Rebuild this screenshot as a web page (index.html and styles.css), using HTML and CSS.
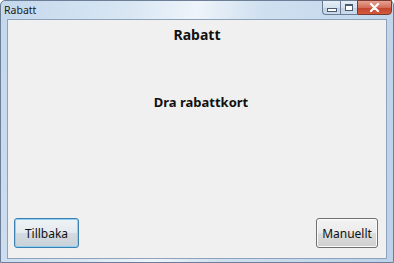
FILE: index.html
```html
<!DOCTYPE html>
<html>
<head>
<meta charset="utf-8">
<link rel="stylesheet" href="styles.css">
</head>
<body>
<div class="window">
  <div class="titlebar">
    <span class="title">Rabatt</span>
    <div class="controls">
      <div class="ctl min"><span class="min-glyph"></span></div>
      <div class="ctl max"><span class="max-glyph"></span></div>
      <div class="ctl close">
        <svg width="11" height="9" viewBox="0 0 11 9"><path d="M2 1 L9 8 M9 1 L2 8" stroke="#fff" stroke-width="2.2" stroke-linecap="round"/></svg>
      </div>
    </div>
  </div>
  <div class="client">
    <h1 class="heading">Rabatt</h1>
    <p class="prompt">Dra rabattkort</p>
    <div class="footer">
      <button class="btn default">Tillbaka</button>
      <button class="btn manual">Manuellt</button>
    </div>
  </div>
</div>
</body>
</html>
```

FILE: styles.css
```css
html, body {
  margin: 0;
  padding: 0;
  width: 394px;
  height: 263px;
  overflow: hidden;
  background: #ffffff;
}
.window {
  box-sizing: border-box;
  width: 394px;
  height: 263px;
  border: 1px solid #6d7f96;
  border-radius: 5px 5px 0 0;
  background: linear-gradient(100deg, #c4d8ec 0%, #d9e7f4 30%, #eef4fa 45%, #cfe0f0 60%, #bcd2e9 100%);
  display: flex;
  flex-direction: column;
  font-family: "Noto Sans", "DejaVu Sans", sans-serif;
}
.titlebar {
  height: 18px;
  display: flex;
  justify-content: space-between;
  align-items: flex-start;
}
.title {
  font-size: 10.5px;
  color: #1a1a1a;
  padding: 3px 0 0 3px;
  line-height: 13px;
}
.controls {
  display: flex;
  margin-top: -1px;
  margin-right: 1px;
}
.ctl {
  box-sizing: border-box;
  height: 15px;
  border: 1px solid #6a7c94;
  display: flex;
  align-items: center;
  justify-content: center;
  background: linear-gradient(#e6eef8 0%, #d4e1ef 50%, #bfd0e4 51%, #cddcec 100%);
}
.min {
  width: 18px;
  border-radius: 0 0 0 4px;
  border-right: none;
}
.max {
  width: 17px;
  border-right: none;
}
.close {
  width: 35px;
  border-radius: 0 0 4px 0;
  border-color: #7a3a30;
  background: linear-gradient(#e8a293 0%, #d36e5b 50%, #c2432c 51%, #d45a3c 100%);
}
.min-glyph {
  width: 8px;
  height: 2px;
  border: 1px solid #4b5a70;
  background: #fff;
  margin-top: 5px;
}
.max-glyph {
  width: 6px;
  height: 4px;
  border: 1px solid #4b5a70;
  border-top-width: 2px;
  background: #fff;
}
.client {
  flex: 1;
  margin: 0 6px 3px 6px;
  border: 1px solid #8ea2ba;
  background: #f0f0f0;
  display: flex;
  flex-direction: column;
  align-items: center;
}
.heading {
  margin: 6px 0 0 0;
  font-size: 14px;
  font-weight: bold;
  line-height: 18px;
  color: #111;
}
.prompt {
  margin: 50px 0 0 8px;
  font-size: 13px;
  font-weight: bold;
  line-height: 16px;
  color: #111;
}
.footer {
  margin-top: auto;
  align-self: stretch;
  display: flex;
  justify-content: space-between;
  padding: 0 8px 10px 6px;
}
.btn {
  box-sizing: border-box;
  height: 30px;
  font-family: "Noto Sans", "DejaVu Sans", sans-serif;
  font-size: 12px;
  color: #111;
  border-radius: 3px;
  padding: 0;
  background: linear-gradient(#f3f3f3 0%, #ebebeb 48%, #dddddd 52%, #cfcfcf 100%);
  border: 1px solid #707070;
  box-shadow: inset 0 0 0 1px #fbfbfb;
}
.default {
  width: 65px;
  border-color: #3c7fb1;
  box-shadow: inset 0 0 0 1px #8fd0f0;
  background: linear-gradient(#eef3f6 0%, #e4eaee 48%, #d3dbe0 52%, #c9d2d8 100%);
}
.manual {
  width: 62px;
}
```
